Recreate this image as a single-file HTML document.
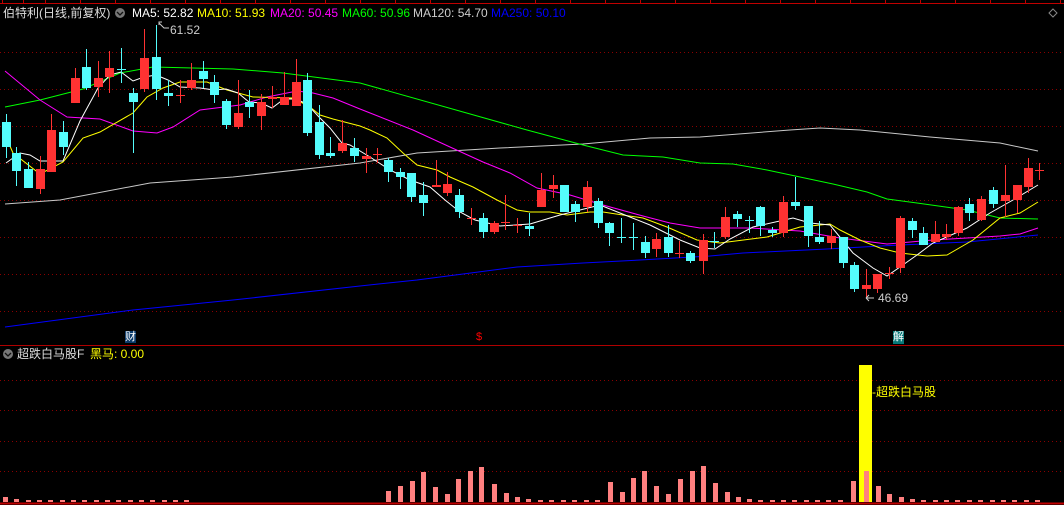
<!DOCTYPE html>
<html><head><meta charset="utf-8"><style>
body{margin:0;background:#000;width:1064px;height:505px;overflow:hidden;font-family:"Liberation Sans","Noto Sans CJK SC",sans-serif;}
.t{position:absolute;font-size:12px;white-space:nowrap;line-height:14px}
</style></head><body>
<svg width="1064" height="505" style="position:absolute;left:0;top:0" xmlns="http://www.w3.org/2000/svg">
<line x1="0" y1="3.5" x2="1064" y2="3.5" stroke="#c00000"/>
<path d="M2.5 0V3M23.5 0V3M45.5 0V3M80.5 0V3M115.5 0V3M150.5 0V3M185.5 0V3M220.5 0V3M255.5 0V3M290.5 0V3M325.5 0V3M360.5 0V3M395.5 0V3M430.5 0V3M465.5 0V3M500.5 0V3M535.5 0V3M570.5 0V3M605.5 0V3M640.5 0V3M675.5 0V3M710.5 0V3M745.5 0V3M780.5 0V3M815.5 0V3M850.5 0V3M885.5 0V3M920.5 0V3M955.5 0V3M990.5 0V3M1025.5 0V3M1060.5 0V3" stroke="#c00000"/>
<path d="M1053 9l4 4-4 4-4-4z" fill="none" stroke="#888"/>
<g stroke="#8a0000" stroke-dasharray="1 3">
<line x1="0" y1="52.5" x2="1064" y2="52.5"/><line x1="0" y1="89.5" x2="1064" y2="89.5"/><line x1="0" y1="126.5" x2="1064" y2="126.5"/><line x1="0" y1="163.5" x2="1064" y2="163.5"/><line x1="0" y1="200.5" x2="1064" y2="200.5"/><line x1="0" y1="237.5" x2="1064" y2="237.5"/><line x1="0" y1="274.5" x2="1064" y2="274.5"/><line x1="0" y1="311.5" x2="1064" y2="311.5"/>
<line x1="0" y1="380.5" x2="1064" y2="380.5"/><line x1="0" y1="410.5" x2="1064" y2="410.5"/><line x1="0" y1="441.5" x2="1064" y2="441.5"/><line x1="0" y1="471.5" x2="1064" y2="471.5"/>
</g>
<line x1="0" y1="345.5" x2="1064" y2="345.5" stroke="#b00000"/>
<line x1="0" y1="503.5" x2="1064" y2="503.5" stroke="#c00000" stroke-width="2"/>
<!-- MA lines -->
<g fill="none" stroke-width="1">
<polyline stroke="#00f" points="5,327 133,310 233,300 360,286 417,280 517,267 583,263 640,260 710,256 743,253 827,249 900,245 967,242 1038,235"/>
<polyline stroke="#c8c8c8" points="5,204 60,200 150,183 233,177 360,163 417,153 500,148 583,144 650,138 700,137 790,130 820,128 860,130 930,137 1000,143 1038,151"/>
<polyline stroke="#0f0" points="5,107 40,100 83,89 120,73 153,67 233,69 283,73 360,83 527,130 583,145 623,155 663,157 700,163 733,164 767,170 800,177 833,184 867,192 887,199 917,203 967,210 1000,218 1038,219"/>
<polyline stroke="#f0f" points="5,71 40,100 67,117 100,119 133,131 157,133 173,127 200,110 240,105 267,97 297,91 313,93 333,98 360,109 413,130 450,147 483,162 510,173 537,188 570,195 603,205 643,216 670,223 700,228 750,228 800,231 840,238 887,244 933,240 967,238 1000,236 1020,234 1038,228"/>
<polyline stroke="#ff0" points="6,137 13,153 40,174 63,162 83,138 100,132 133,113 147,97 163,88 180,82 207,82 227,90 253,97 293,98 310,107 320,115 333,119 360,126 370,130 387,138 403,153 417,165 437,170 450,177 473,187 497,200 517,210 530,212 550,212 567,215 590,212 603,212 643,218 667,227 697,240 720,243 767,237 800,227 830,224 840,230 860,240 880,248 900,253 927,256 947,255 973,240 1000,218 1020,213 1038,202"/>
<polyline stroke="#fff" points="6,163 20,153 30,155 40,161 63,161 80,121 98,88 110,75 121,72 133,81 144,77 156,75 168,80 180,87 200,88 214,90 226,89 238,93 249,102 261,103 272,108 284,99 296,99 307,104 319,117 330,128 342,143 350,145 370,157 390,170 410,180 430,187 445,200 460,212 475,220 500,226 530,224 560,215 580,210 600,205 620,213 650,225 680,240 700,248 715,249 730,239 753,227 793,218 810,223 830,225 853,253 873,268 887,276 900,267 917,255 933,243 967,228 990,213 1013,200 1038,185"/>
</g>
<!-- wicks -->
<path stroke="#54fcfc" d="M6.5 114V158M16.5 147V186M28.5 162V188M63.5 121V155M86.5 49V90M121.5 48V83M133.5 88V153M156.5 25V100M168.5 80V106M203.5 61V88M214.5 75V103M226.5 99V129M249.5 90V118M307.5 73V136M319.5 105V159M330.5 137V158M354.5 138V162M388.5 158V182M400.5 168V189M411.5 173V202M423.5 182V216M459.5 189V218M483.5 213V238M529.5 213V236M564.5 185V212M575.5 201V222M598.5 198V228M609.5 222V246M621.5 218V243M633.5 223V250M645.5 236V258M668.5 225V257M690.5 251V263M714.5 232V248M737.5 211V227M749.5 216V233M760.5 206V236M772.5 227V237M795.5 177V210M808.5 206V247M819.5 221V244M843.5 237V268M854.5 262V292M912.5 218V238M923.5 227V245M969.5 198V221M993.5 187V208"/>
<path stroke="#ff3232" d="M40.5 156V194M51.5 114V172M75.5 68V103M98.5 61V97M109.5 51V93M144.5 29V92M180.5 80V103M191.5 63V90M238.5 80V129M261.5 94V130M272.5 86V108M284.5 72V105M296.5 59V106M342.5 120V153M366.5 148V173M377.5 148V163M436.5 160V187M447.5 172V196M471.5 208V225M494.5 221V234M505.5 195V230M517.5 218V233M541.5 173V207M553.5 175V198M587.5 181V212M656.5 233V257M679.5 241V258M703.5 234V274M725.5 207V239M783.5 196V237M831.5 229V249M866.5 269V297M877.5 274V293M889.5 267V279M900.5 216V273M935.5 221V242M946.5 224V240M958.5 206V236M981.5 196V221M1005.5 165V217M1017.5 185V213M1028.5 158V193M1039.5 163V180"/>
<g fill="#54fcfc">
<rect x="2" y="122" width="9" height="25"/><rect x="12" y="153" width="9" height="18"/><rect x="24" y="169" width="9" height="19"/><rect x="59" y="132" width="9" height="15"/><rect x="82" y="67" width="9" height="21"/><rect x="117" y="69" width="9" height="1"/><rect x="129" y="93" width="9" height="9"/><rect x="152" y="57" width="9" height="32"/><rect x="164" y="93" width="9" height="3"/><rect x="199" y="71" width="9" height="8"/><rect x="210" y="82" width="9" height="13"/><rect x="222" y="101" width="9" height="24"/><rect x="245" y="102" width="9" height="5"/><rect x="303" y="80" width="9" height="53"/><rect x="315" y="122" width="9" height="33"/><rect x="326" y="153" width="9" height="3"/><rect x="350" y="148" width="9" height="8"/><rect x="384" y="160" width="9" height="12"/><rect x="396" y="172" width="9" height="5"/><rect x="407" y="173" width="9" height="24"/><rect x="419" y="195" width="9" height="8"/><rect x="455" y="195" width="9" height="17"/><rect x="479" y="218" width="9" height="14"/><rect x="525" y="226" width="9" height="3"/><rect x="560" y="185" width="9" height="27"/><rect x="571" y="204" width="9" height="8"/><rect x="594" y="201" width="9" height="22"/><rect x="605" y="223" width="9" height="10"/><rect x="617" y="237" width="9" height="1"/><rect x="629" y="237" width="9" height="1"/><rect x="641" y="242" width="9" height="11"/><rect x="664" y="237" width="9" height="16"/><rect x="686" y="253" width="9" height="8"/><rect x="710" y="241" width="9" height="1"/><rect x="733" y="214" width="9" height="5"/><rect x="745" y="220" width="9" height="1"/><rect x="756" y="207" width="9" height="19"/><rect x="768" y="230" width="9" height="3"/><rect x="791" y="202" width="9" height="4"/><rect x="804" y="206" width="9" height="30"/><rect x="815" y="237" width="9" height="5"/><rect x="839" y="237" width="9" height="26"/><rect x="850" y="265" width="9" height="24"/><rect x="908" y="221" width="9" height="9"/><rect x="919" y="233" width="9" height="12"/><rect x="965" y="204" width="9" height="9"/><rect x="989" y="190" width="9" height="14"/>
</g>
<g fill="#ff3232">
<rect x="36" y="169" width="9" height="20"/><rect x="47" y="130" width="9" height="42"/><rect x="71" y="78" width="9" height="25"/><rect x="94" y="78" width="9" height="9"/><rect x="105" y="68" width="9" height="9"/><rect x="140" y="58" width="9" height="31"/><rect x="176" y="95" width="9" height="1"/><rect x="187" y="80" width="9" height="8"/><rect x="234" y="113" width="9" height="14"/><rect x="257" y="102" width="9" height="14"/><rect x="268" y="97" width="9" height="2"/><rect x="280" y="97" width="9" height="8"/><rect x="292" y="82" width="9" height="24"/><rect x="338" y="143" width="9" height="8"/><rect x="362" y="156" width="9" height="3"/><rect x="373" y="154" width="9" height="1"/><rect x="432" y="185" width="9" height="2"/><rect x="443" y="184" width="9" height="9"/><rect x="467" y="218" width="9" height="1"/><rect x="490" y="223" width="9" height="9"/><rect x="501" y="222" width="9" height="1"/><rect x="513" y="225" width="9" height="1"/><rect x="537" y="190" width="9" height="17"/><rect x="549" y="185" width="9" height="4"/><rect x="583" y="187" width="9" height="20"/><rect x="652" y="239" width="9" height="10"/><rect x="675" y="253" width="9" height="1"/><rect x="699" y="240" width="9" height="21"/><rect x="721" y="217" width="9" height="20"/><rect x="779" y="202" width="9" height="31"/><rect x="827" y="236" width="9" height="7"/><rect x="862" y="285" width="9" height="4"/><rect x="873" y="274" width="9" height="15"/><rect x="885" y="273" width="9" height="1"/><rect x="896" y="218" width="9" height="50"/><rect x="931" y="234" width="9" height="8"/><rect x="942" y="234" width="9" height="3"/><rect x="954" y="207" width="9" height="26"/><rect x="977" y="199" width="9" height="21"/><rect x="1001" y="195" width="9" height="6"/><rect x="1013" y="185" width="9" height="15"/><rect x="1024" y="168" width="9" height="19"/><rect x="1035" y="170" width="9" height="1"/>
</g>
<path d="M159 25v-3h3M159 23l5 5h5" stroke="#ccc" fill="none"/>
<path d="M866 298h8M866 298l3-3M866 298l3 3" stroke="#ccc" fill="none"/>
<!-- markers -->
<rect x="125" y="331" width="11" height="12" fill="#0a3a6a"/>
<rect x="893" y="331" width="11" height="13" fill="#087878"/>
<!-- lower bars -->
<rect x="859" y="365" width="13" height="137" fill="#ff0"/>
<g fill="#ff8080">
<rect x="3" y="497" width="5" height="5"/><rect x="14" y="499" width="5" height="3"/><rect x="26" y="500" width="5" height="2"/>
<path d="M37 500h5v2h-5zM48 500h5v2h-5zM60 500h5v2h-5zM71 500h5v2h-5zM82 500h5v2h-5zM94 500h5v2h-5zM105 500h5v2h-5zM116 500h5v2h-5zM128 500h5v2h-5zM139 500h5v2h-5zM150 500h5v2h-5zM162 500h5v2h-5zM173 500h5v2h-5zM184 500h5v2h-5zM538 500h5v2h-5zM549 500h5v2h-5zM561 500h5v2h-5zM572 500h5v2h-5zM584 500h5v2h-5zM595 500h5v2h-5zM758 500h5v2h-5zM770 500h5v2h-5zM781 500h5v2h-5zM792 500h5v2h-5zM804 500h5v2h-5zM815 500h5v2h-5zM826 500h5v2h-5zM838 500h5v2h-5zM921 500h5v2h-5zM933 500h5v2h-5zM944 500h5v2h-5zM955 500h5v2h-5zM967 500h5v2h-5zM978 500h5v2h-5zM990 500h5v2h-5zM1001 500h5v2h-5zM1012 500h5v2h-5zM1024 500h5v2h-5zM1035 500h5v2h-5z"/>
<rect x="386" y="491" width="5" height="11"/><rect x="398" y="486" width="5" height="16"/><rect x="410" y="481" width="5" height="21"/><rect x="421" y="472" width="5" height="30"/><rect x="433" y="487" width="5" height="15"/><rect x="445" y="494" width="5" height="8"/><rect x="456" y="479" width="5" height="23"/><rect x="468" y="471" width="5" height="31"/><rect x="479" y="467" width="5" height="35"/><rect x="492" y="484" width="5" height="18"/><rect x="504" y="493" width="5" height="9"/><rect x="515" y="497" width="5" height="5"/><rect x="526" y="499" width="5" height="3"/>
<rect x="608" y="482" width="5" height="20"/><rect x="620" y="492" width="5" height="10"/><rect x="631" y="478" width="5" height="24"/><rect x="642" y="471" width="5" height="31"/><rect x="654" y="486" width="5" height="16"/><rect x="666" y="494" width="5" height="8"/><rect x="678" y="479" width="5" height="23"/><rect x="690" y="471" width="5" height="31"/><rect x="701" y="466" width="5" height="36"/><rect x="713" y="483" width="5" height="19"/><rect x="725" y="492" width="5" height="10"/><rect x="736" y="497" width="5" height="5"/><rect x="747" y="499" width="5" height="3"/>
<rect x="851" y="481" width="5" height="21"/><rect x="864" y="471" width="5" height="31"/><rect x="876" y="486" width="5" height="16"/><rect x="887" y="494" width="5" height="8"/><rect x="899" y="497" width="5" height="5"/><rect x="910" y="499" width="5" height="3"/>
</g>
<circle cx="120" cy="13" r="5" fill="#777"/><path d="M117 12l3 3 3-3" stroke="#111" fill="none" stroke-width="1.3"/>
<circle cx="8" cy="354" r="5" fill="#777"/><path d="M5 353l3 3 3-3" stroke="#111" fill="none" stroke-width="1.3"/>
</svg>
<div class="t" style="left:3px;top:6px;color:#ddd">伯特利(日线,前复权)</div>
<div class="t" style="left:132px;top:6px;color:#fff">MA5: 52.82</div>
<div class="t" style="left:197px;top:6px;color:#ff0">MA10: 51.93</div>
<div class="t" style="left:270px;top:6px;color:#f0f">MA20: 50.45</div>
<div class="t" style="left:342px;top:6px;color:#0f0">MA60: 50.96</div>
<div class="t" style="left:413px;top:6px;color:#ccc">MA120: 54.70</div>
<div class="t" style="left:491px;top:6px;color:#00f">MA250: 50.10</div>
<div class="t" style="left:170px;top:23px;color:#ccc">61.52</div>
<div class="t" style="left:878px;top:291px;color:#ccc">46.69</div>
<div class="t" style="left:125px;top:330px;color:#fff;font-size:11px">财</div>
<div class="t" style="left:476px;top:330px;color:#f00;font-size:11px">$</div>
<div class="t" style="left:893px;top:330px;color:#fff;font-size:11px">解</div>
<div class="t" style="left:17px;top:347px;color:#ddd">超跌白马股F</div>
<div class="t" style="left:90px;top:347px;color:#ff0">黑马: 0.00</div>
<div class="t" style="left:872px;top:385px;color:#ff0">-超跌白马股</div>
</body></html>
